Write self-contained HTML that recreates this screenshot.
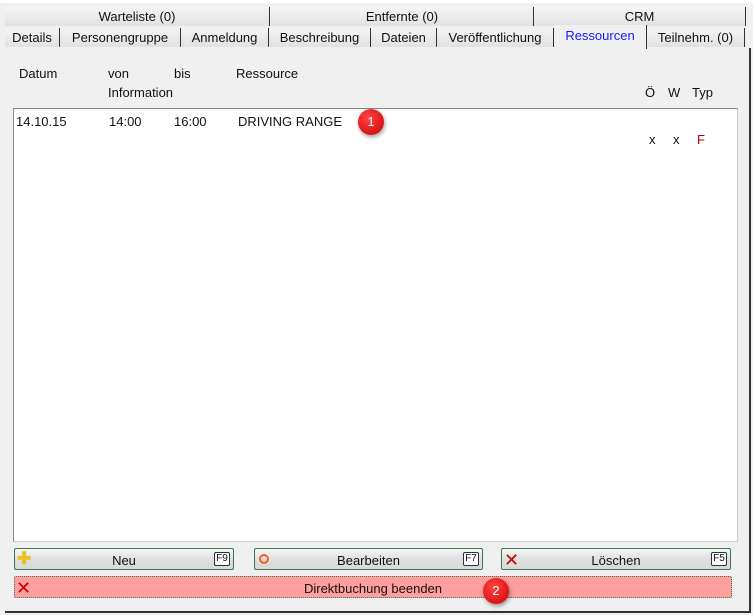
<!DOCTYPE html><html><head><style>
body{margin:0;width:753px;height:615px;background:#f0f0f0;position:relative;overflow:hidden;font-family:"Liberation Sans",sans-serif;font-size:13px;color:#111}
.a{position:absolute}
.t{position:absolute;background:linear-gradient(#f4f4f4,#e2e2e2);border-right:1px solid #333;text-align:center;line-height:20px;height:19px}
.btn{position:absolute;height:20px;border:1px solid #3a7a4a;border-radius:2px;background:linear-gradient(#f6f6f6,#e0e0e0 50%,#d8d8d8);text-align:center;line-height:23px}
.f{position:absolute;right:3px;top:3px;border:1px solid #234;border-radius:2px;font-size:10px;line-height:12px;width:14px;height:12px;background:#fff;text-align:center}
.badge{position:absolute;width:26px;height:26px;border-radius:50%;background:radial-gradient(circle at 40% 35%,#f44,#c00);color:#fff;text-align:center;line-height:26px;font-size:13px;box-shadow:1px 2px 4px rgba(0,0,0,.4)}
</style></head><body>
<div class="a" style="left:0;top:0;width:753px;height:3px;background:#fff"></div>
<div class="t" style="left:5px;top:7px;width:264px">Warteliste (0)</div>
<div class="t" style="left:271px;top:7px;width:262px">Entfernte (0)</div>
<div class="t" style="left:534px;top:7px;width:211px">CRM</div>
<div class="t" style="left:5px;top:28px;width:54px">Details</div>
<div class="t" style="left:60px;top:28px;width:120px">Personengruppe</div>
<div class="t" style="left:181px;top:28px;width:87px">Anmeldung</div>
<div class="t" style="left:269px;top:28px;width:101px">Beschreibung</div>
<div class="t" style="left:371px;top:28px;width:65px">Dateien</div>
<div class="t" style="left:437px;top:28px;width:116px">Veröffentlichung</div>
<div class="t" style="left:647px;top:28px;width:97px">Teilnehm. (0)</div>
<div class="a" style="left:5px;top:48px;width:744px;height:563px;background:#f0f0f0;border-right:2px solid #333;border-bottom:2px solid #333"></div>
<div class="a" style="left:554px;top:25px;width:92px;height:24px;background:#f0f0f0;border-right:1px solid #333;color:#1a1aff;text-align:center;line-height:22px">Ressourcen</div>
<div class="a" style="left:19px;top:66px">Datum</div>
<div class="a" style="left:108px;top:66px">von</div>
<div class="a" style="left:174px;top:66px">bis</div>
<div class="a" style="left:236px;top:66px">Ressource</div>
<div class="a" style="left:108px;top:85px">Information</div>
<div class="a" style="left:645px;top:85px">Ö</div>
<div class="a" style="left:668px;top:85px">W</div>
<div class="a" style="left:692px;top:85px">Typ</div>
<div class="a" style="left:13px;top:108px;width:723px;height:432px;background:#fff;border:1px solid #888;border-right-color:#ccc;border-bottom-color:#ccc"></div>
<div class="a" style="left:16px;top:114px">14.10.15</div>
<div class="a" style="left:109px;top:114px">14:00</div>
<div class="a" style="left:174px;top:114px">16:00</div>
<div class="a" style="left:238px;top:114px">DRIVING RANGE</div>
<div class="a" style="left:649px;top:132px">x</div>
<div class="a" style="left:673px;top:132px">x</div>
<div class="a" style="left:697px;top:132px;color:#a00">F</div>
<div class="badge" style="left:358px;top:109px">1</div>
<div class="btn" style="left:14px;top:548px;width:218px">Neu<span class="a" style="left:2px;top:0;color:#e8c020;font-size:17px;font-weight:bold;line-height:20px">✚</span><span class="f">F9</span></div>
<div class="btn" style="left:254px;top:548px;width:227px">Bearbeiten<span class="a" style="left:4px;top:5px;width:6px;height:6px;border:2px solid #f06020;border-radius:50%"></span><span class="f">F7</span></div>
<div class="btn" style="left:501px;top:548px;width:228px">Löschen<span class="a" style="left:2px;top:0;color:#c00;font-size:18px;line-height:22px">✕</span><span class="f">F5</span></div>
<div class="btn" style="left:14px;top:576px;width:716px;background:#ff9f9f;border-style:dotted">Direktbuchung beenden<span class="a" style="left:1px;top:0;color:#c00;font-size:18px;line-height:22px">✕</span></div>
<div class="badge" style="left:483px;top:578px">2</div>
</body></html>
